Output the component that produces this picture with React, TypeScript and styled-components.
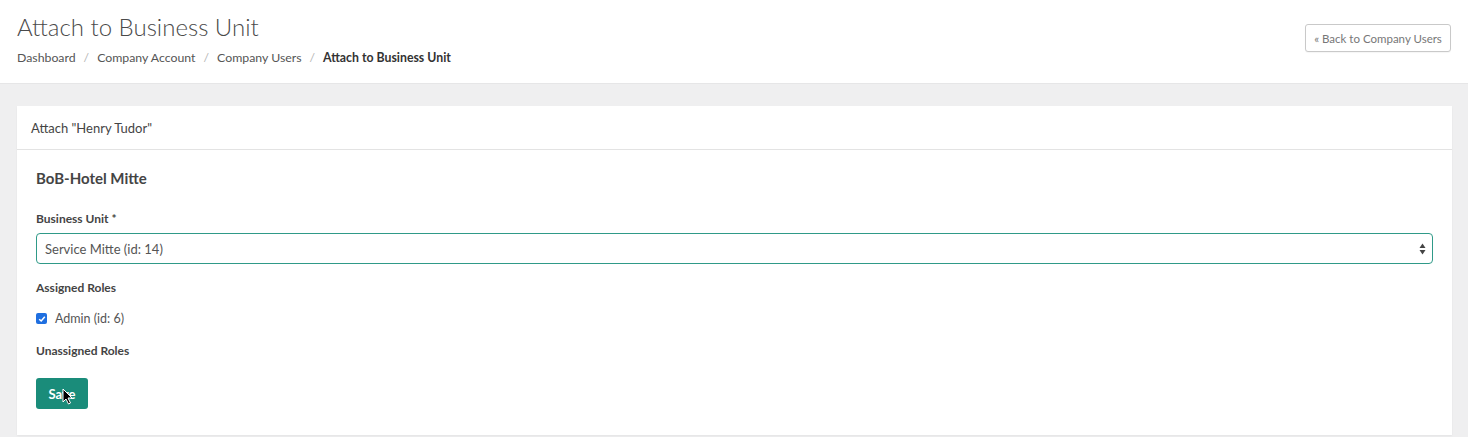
import React from "react";
import styled, { createGlobalStyle } from "styled-components";

const Global = createGlobalStyle`
  html, body { margin: 0; padding: 0; background: #efeff0; }
  body { font-family: Lato, "Open Sans", "Liberation Sans", sans-serif; color: #333; }
  * { box-sizing: border-box; }
`;

const Page = styled.div`
  width: 1468px;
  min-height: 437px;
  background: #efeff0;
`;

const Header = styled.header`
  background: #fff;
  height: 84px;
  padding: 13px 17px 0 17px;
  display: flex;
  justify-content: space-between;
  align-items: flex-start;
  border-bottom: 1px solid #e6e6e7;
`;

const TitleBlock = styled.div`
  display: flex;
  flex-direction: column;
`;

const Title = styled.h1`
  margin: 0;
  font-size: 24px;
  font-weight: 300;
  color: #4a4a4a;
  line-height: 28px;
`;

const Crumbs = styled.nav`
  margin-top: 9px;
  display: flex;
  align-items: center;
  font-size: 12.3px;
  color: #555;
`;

const Crumb = styled.span<{ $active?: boolean }>`
  font-weight: ${(p) => (p.$active ? 700 : 400)};
  color: ${(p) => (p.$active ? "#333" : "#555")};
`;

const Sep = styled.span`
  color: #b5b5b5;
  margin: 0 8px;
`;

const BackButton = styled.button`
  margin-top: 11px;
  height: 28px;
  width: 146px;
  background: #fff;
  border: 1px solid #c9c9c9;
  border-radius: 3px;
  font-family: inherit;
  font-size: 11.5px;
  color: #777;
  padding: 0 6px;
  box-shadow: 0 1px 1px rgba(0, 0, 0, 0.04);
`;

const Content = styled.main`
  padding: 22px 16px 0 17px;
`;

const Card = styled.section`
  background: #fff;
  height: 329px;
  width: 1435px;
  box-shadow: 0 1px 2px rgba(0, 0, 0, 0.05);
`;

const CardHeader = styled.div`
  height: 44px;
  padding: 0 14px;
  display: flex;
  align-items: center;
  font-size: 13px;
  color: #444;
  border-bottom: 1px solid #e3e3e3;
`;

const CardBody = styled.div`
  padding: 19px 19px 0 19px;
  display: flex;
  flex-direction: column;
`;

const Unit = styled.h2`
  margin: 0;
  font-size: 15px;
  font-weight: 700;
  color: #444;
  line-height: 18px;
`;

const Label = styled.div<{ $mt: number }>`
  margin-top: ${(p) => p.$mt}px;
  font-size: 12px;
  font-weight: 700;
  color: #444;
  line-height: 15px;
`;

const SelectBox = styled.div`
  margin-top: 7px;
  height: 31px;
  width: 1397px;
  border: 1px solid #2f9a88;
  border-radius: 4px;
  display: flex;
  align-items: center;
  justify-content: space-between;
  padding: 0 6px 0 8px;
  font-size: 13px;
  color: #555;
`;

const Arrows = styled.svg`
  width: 7px;
  height: 12px;
`;

const CheckRow = styled.label`
  margin-top: 16px;
  display: flex;
  align-items: center;
  gap: 8px;
  font-size: 12.5px;
  color: #555;
  line-height: 15px;
`;

const Check = styled.span`
  width: 11px;
  height: 11px;
  border-radius: 2px;
  background: #1f6fe0;
  display: flex;
  align-items: center;
  justify-content: center;
`;

const SaveWrap = styled.div`
  margin-top: 20px;
  position: relative;
  width: 52px;
`;

const SaveButton = styled.button`
  width: 52px;
  height: 31px;
  background: #1a8c7a;
  border: none;
  border-radius: 3px;
  color: #fff;
  font-family: inherit;
  font-weight: 700;
  font-size: 13px;
  padding: 0;
`;

const Cursor = styled.svg`
  position: absolute;
  left: 26px;
  top: 10px;
  width: 11px;
  height: 17px;
  pointer-events: none;
`;

export default function App() {
  return (
    <Page>
      <Global />
      <Header>
        <TitleBlock>
          <Title>Attach to Business Unit</Title>
          <Crumbs>
            <Crumb>Dashboard</Crumb>
            <Sep>/</Sep>
            <Crumb>Company Account</Crumb>
            <Sep>/</Sep>
            <Crumb>Company Users</Crumb>
            <Sep>/</Sep>
            <Crumb $active>Attach to Business Unit</Crumb>
          </Crumbs>
        </TitleBlock>
        <BackButton>« Back to Company Users</BackButton>
      </Header>
      <Content>
        <Card>
          <CardHeader>Attach "Henry Tudor"</CardHeader>
          <CardBody>
            <Unit>BoB-Hotel Mitte</Unit>
            <Label $mt={24}>Business Unit *</Label>
            <SelectBox>
              <span>Service Mitte (id: 14)</span>
              <Arrows viewBox="0 0 7 12">
                <path d="M3.5 0.5 L6.5 5 L0.5 5 Z" fill="#444" />
                <path d="M3.5 11.5 L6.5 7 L0.5 7 Z" fill="#444" />
              </Arrows>
            </SelectBox>
            <Label $mt={16}>Assigned Roles</Label>
            <CheckRow>
              <Check>
                <svg width="8" height="8" viewBox="0 0 8 8">
                  <path d="M1.2 4.2 L3.2 6 L6.8 1.8" stroke="#fff" strokeWidth="1.5" fill="none" />
                </svg>
              </Check>
              Admin (id: 6)
            </CheckRow>
            <Label $mt={17}>Unassigned Roles</Label>
            <SaveWrap>
              <SaveButton>Save</SaveButton>
              <Cursor viewBox="0 0 11 17">
                <path d="M1 1 L1 14 L4 11 L6.5 16 L8.5 15 L6 10 L10 10 Z" fill="#000" stroke="#fff" strokeWidth="1" />
              </Cursor>
            </SaveWrap>
          </CardBody>
        </Card>
      </Content>
    </Page>
  );
}
